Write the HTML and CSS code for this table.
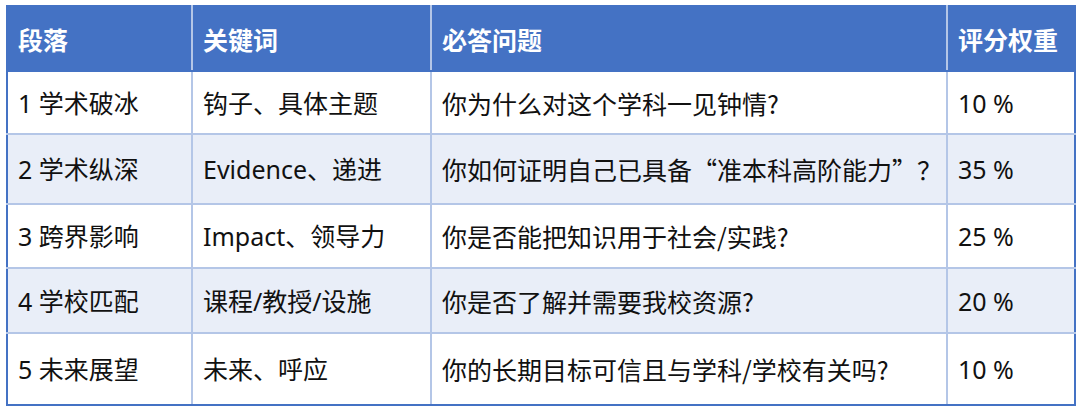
FILE: index.html
```html
<!DOCTYPE html>
<html lang="zh-CN">
<head>
<meta charset="utf-8">
<link rel="stylesheet" href="styles.css">
</head>
<body>
<div class="wrap">
<table class="grid">
<colgroup>
<col class="c1"><col class="c2"><col class="c3"><col class="c4">
</colgroup>
<thead>
<tr class="r0"><th>段落</th><th>关键词</th><th>必答问题</th><th>评分权重</th></tr>
</thead>
<tbody>
<tr class="r1"><td>1 学术破冰</td><td>钩子、具体主题</td><td class="q">你为什么对这个学科一见钟情?</td><td>10 %</td></tr>
<tr class="r2 alt"><td>2 学术纵深</td><td>Evidence、递进</td><td class="q">你如何证明自己已具备“准本科高阶能力”？</td><td>35 %</td></tr>
<tr class="r3"><td>3 跨界影响</td><td>Impact、领导力</td><td class="q">你是否能把知识用于社会/实践?</td><td>25 %</td></tr>
<tr class="r4 alt"><td>4 学校匹配</td><td>课程/教授/设施</td><td class="q">你是否了解并需要我校资源?</td><td>20 %</td></tr>
<tr class="r5"><td>5 未来展望</td><td>未来、呼应</td><td class="q">你的长期目标可信且与学科/学校有关吗?</td><td>10 %</td></tr>
</tbody>
</table>
</div>
</body>
</html>
```
FILE: styles.css
```css
html, body {
  margin: 0;
  padding: 0;
  background: #ffffff;
}
.wrap {
  padding: 5px 0 0 6px;
}
.grid {
  border-collapse: collapse;
  table-layout: fixed;
  width: 1068px;
  font-family: "Noto Sans", "Noto Sans CJK SC", sans-serif;
  font-size: 25px;
  color: #111111;
}
.c1 { width: 185px; }
.c2 { width: 239px; }
.c3 { width: 516px; }
.c4 { width: 128px; }
.grid th,
.grid td {
  border: 2px solid #b4c6e7;
  padding: 0 0 0 10px;
  text-align: left;
  vertical-align: middle;
  white-space: nowrap;
  overflow: hidden;
  line-height: 1.2;
}
.grid th {
  background: #4472c4;
  color: #ffffff;
  font-family: "Noto Sans CJK SC", sans-serif;
  font-weight: 700;
  border-top-color: #4472c4;
  border-bottom-color: #4472c4;
}
.grid th:first-child,
.grid td:first-child { border-left-color: #4472c4; }
.grid th:last-child,
.grid td:last-child { border-right-color: #4472c4; }
.grid tbody tr:last-child td { border-bottom-color: #4472c4; }
.grid .q {
  font-family: "Noto Sans CJK SC", sans-serif;
}
.alt td { background: #e9eef8; }
.r0 { height: 65px; }
.r1 { height: 63px; }
.r2 { height: 70px; }
.r3 { height: 64px; }
.r4 { height: 65px; }
.r5 { height: 72px; }
```
